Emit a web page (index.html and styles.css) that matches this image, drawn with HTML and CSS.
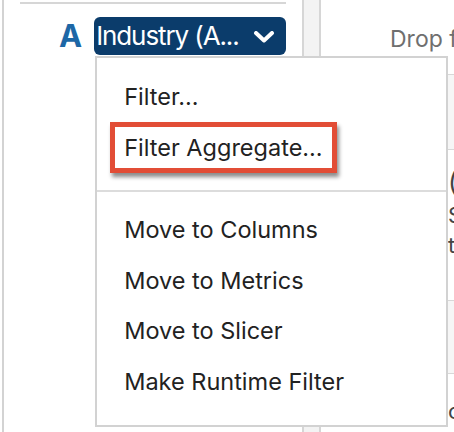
FILE: index.html
```html
<!DOCTYPE html>
<html lang="en">
<head>
<meta charset="utf-8">
<title>Industry field menu</title>
<link rel="stylesheet" href="styles.css">
</head>
<body>
<div class="app">
  <section class="left">
    <div class="rule"></div>
    <div class="field-row">
      <span class="field-type">A</span>
      <div class="badge-wrap">
        <div class="badge">
          <span class="badge-label">Industry (A...</span>
          <svg class="chevron" width="22" height="12" viewBox="0 0 22 12"><polyline points="3,2 11,9.5 19,2" fill="none" stroke="#fff" stroke-width="4" stroke-linecap="round" stroke-linejoin="round"/></svg>
        </div>
        <div class="menu">
          <div class="item">Filter...</div>
          <div class="item highlight">Filter Aggregate...</div>
          <div class="sep"></div>
          <div class="group">
            <div class="item">Move to Columns</div>
            <div class="item">Move to Metrics</div>
            <div class="item">Move to Slicer</div>
            <div class="item">Make Runtime Filter</div>
          </div>
        </div>
      </div>
    </div>
  </section>
  <div class="strip"></div>
  <section class="right">
    <div class="drop">Drop fields here</div>
    <div class="grid">
      <div class="row shade">Region</div>
      <div class="row tall">
        <div class="line big">(Group</div>
        <div class="line">Sum</div>
        <div class="line">total</div>
      </div>
      <div class="row shade short"></div>
      <div class="row">olumns</div>
    </div>
  </section>
</div>
</body>
</html>
```
FILE: styles.css
```css
html, body {
  margin: 0;
  padding: 0;
  background: #fff;
}
body {
  width: 454px;
  height: 432px;
  overflow: hidden;
  font-family: Inter, "Noto Sans", sans-serif;
}
.app {
  display: flex;
  height: 432px;
}
.left {
  box-sizing: border-box;
  margin-left: 2px;
  width: 300px;
  border-left: 2px solid #d3d3d3;
  position: relative;
}
.rule {
  height: 2px;
  margin: 2px 16px 0 16px;
  background: #d6d6d6;
}
.field-row {
  display: flex;
  align-items: center;
  margin-top: 13px;
  padding-left: 55px;
  gap: 12px;
}
.field-type {
  font-family: Inter, sans-serif;
  font-weight: 700;
  font-size: 31px;
  line-height: 38px;
  color: #1d67a6;
}
.badge-wrap {
  position: relative;
}
.badge {
  box-sizing: border-box;
  width: 192px;
  height: 38px;
  background: #0b3c6b;
  border-radius: 6px;
  display: flex;
  align-items: center;
  justify-content: space-between;
  padding: 0 11px 0 2px;
  color: #fff;
}
.badge-label {
  font-size: 26px;
  letter-spacing: -1.1px;
  line-height: 38px;
  white-space: nowrap;
}
.chevron {
  display: block;
  margin-top: 1px;
}
.menu {
  position: absolute;
  top: 39px;
  left: 1px;
  box-sizing: border-box;
  width: 353px;
  height: 371px;
  background: #fff;
  border: 2px solid #d2d2d2;
  padding-top: 14px;
  z-index: 5;
  color: #222;
}
.item {
  font-size: 23.5px;
  line-height: 50px;
  padding-left: 27px;
  white-space: nowrap;
}
.item.highlight {
  width: fit-content;
  margin-left: 13px;
  padding: 0 9px 0 9px;
  line-height: 41px;
  border: 5px solid #e24d36;
  box-shadow: 2px 4px 4px rgba(0, 0, 0, 0.45);
}
.sep {
  height: 2px;
  margin-top: 17px;
  background: #dcdcdc;
}
.group {
  margin-top: 13px;
}
.group .item {
  line-height: 50.6px;
}
.strip {
  box-sizing: border-box;
  width: 19px;
  flex: none;
  background: #f3f3f3;
  border-left: 2px solid #d6d6d6;
  border-right: 2px solid #d6d6d6;
}
.right {
  flex: 1;
  overflow: hidden;
  color: #6f6f6f;
}
.drop {
  font-size: 23px;
  line-height: 28px;
  padding: 25px 0 0 69px;
  white-space: nowrap;
  box-sizing: border-box;
  height: 74px;
}
.row {
  box-sizing: border-box;
  border-top: 1px solid #d8d8d8;
  padding-left: 127px;
  white-space: nowrap;
  font-size: 22px;
  color: #444;
  height: 75px;
  line-height: 74px;
}
.row.shade {
  background: #f6f6f6;
  color: #f6f6f6;
}
.row.tall {
  height: 151px;
  line-height: normal;
  padding-top: 16px;
}
.row.short {
  height: 73px;
}
.line {
  line-height: 30px;
}
.line.big {
  font-size: 26px;
  line-height: 34px;
}
```
